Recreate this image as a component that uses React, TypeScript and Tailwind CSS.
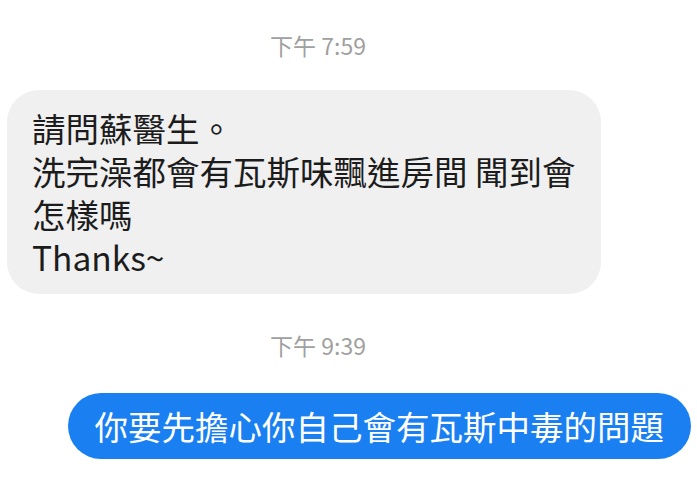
const font = { fontFamily: '"Noto Sans CJK TC", "Noto Sans", sans-serif' };

function Stamp({ text }: { text: string }) {
  return (
    <p className="mr-[61px] text-center text-[23px] leading-[26px] text-[#a0a0a0]" style={font}>
      {text}
    </p>
  );
}

export default function App() {
  return (
    <div className="h-[482px] w-[697px] overflow-hidden bg-white" style={font}>
      <div className="pt-[32px]">
        <Stamp text="下午 7:59" />
      </div>

      <div className="ml-[7px] mt-[32px] w-[594px] rounded-[32px] bg-[#f0f0f0] pb-[16px] pl-[25px] pt-[16px] text-[33.5px] leading-[43px] text-[#1c1c1c]">
        <p>請問蘇醫生。</p>
        <p>洗完澡都會有瓦斯味飄進房間 聞到會</p>
        <p>怎樣嗎</p>
        <p>Thanks~</p>
      </div>

      <div className="mt-[38px]">
        <Stamp text="下午 9:39" />
      </div>

      <div className="mt-[35px] flex justify-end pr-[6px]">
        <div className="flex h-[66px] items-center rounded-full bg-[#1a80f2] px-[27px] text-[33.5px] text-white">
          你要先擔心你自己會有瓦斯中毒的問題
        </div>
      </div>
    </div>
  );
}
